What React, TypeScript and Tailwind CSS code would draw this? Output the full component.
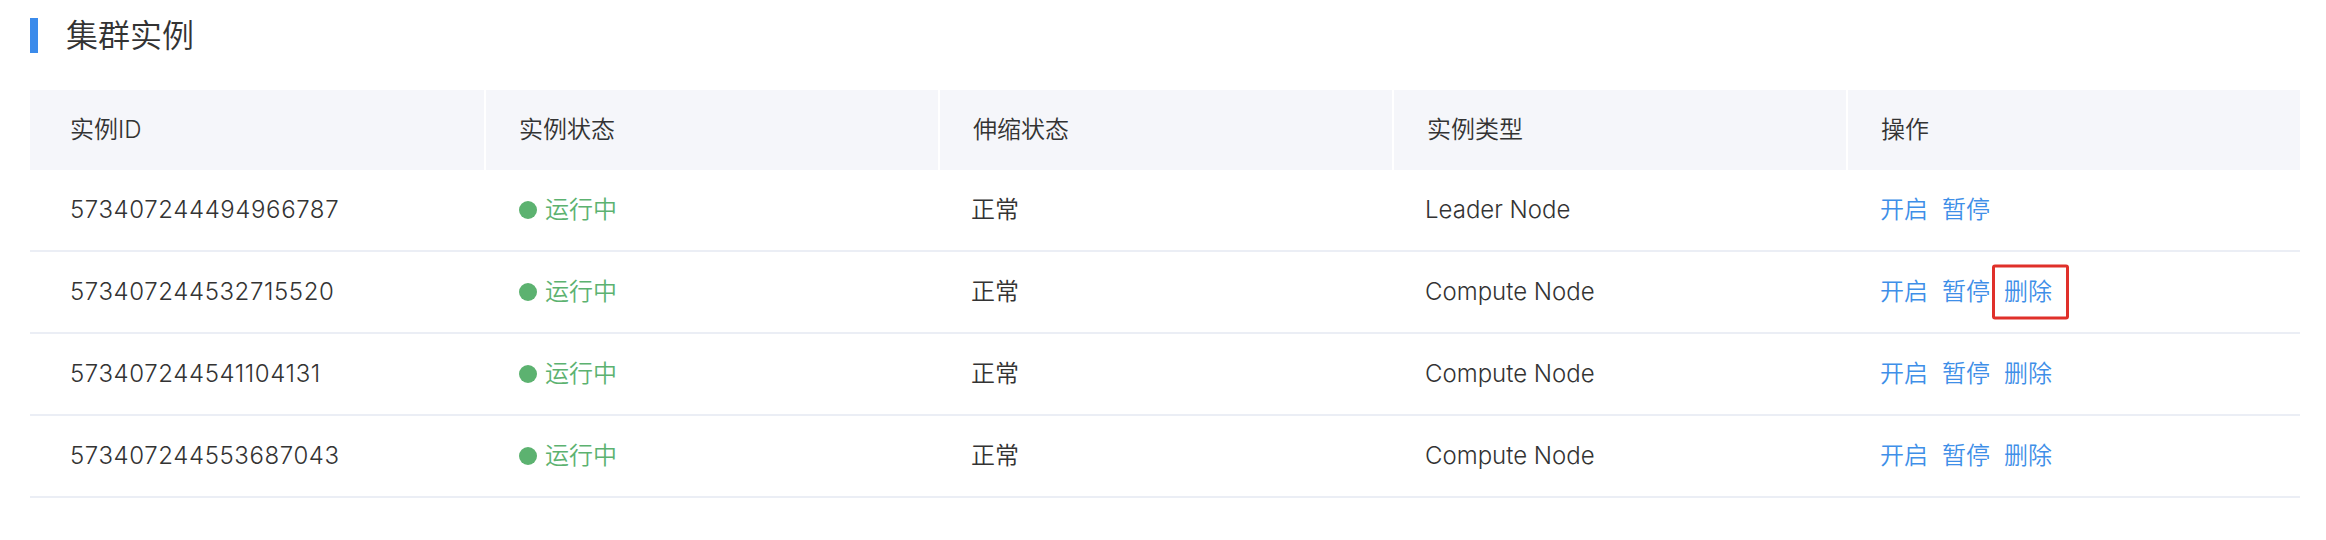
const rows = [
  { id: '573407244494966787', type: 'Leader Node', canDelete: false },
  { id: '573407244532715520', type: 'Compute Node', canDelete: true, marked: true },
  { id: '573407244541104131', type: 'Compute Node', canDelete: true },
  { id: '573407244553687043', type: 'Compute Node', canDelete: true },
]

const headers = ['实例ID', '实例状态', '伸缩状态', '实例类型', '操作']

export default function App() {
  return (
    <div
      className="min-h-screen w-[2326px] bg-white pt-[18px] font-[350] text-[#333]"
      style={{ fontFamily: "Inter, 'Noto Sans CJK SC', sans-serif" }}
    >
      {/* 标题 */}
      <div className="flex h-[35px] items-center pl-[30px]">
        <div className="h-[35px] w-[8px] bg-[#3b8beb]" />
        <h2 className="ml-[28px] text-[32px] leading-none text-[#333]">集群实例</h2>
      </div>

      {/* 表格 */}
      <div className="ml-[30px] mt-[37px] w-[2270px]">
        <div className="grid h-[80px] grid-cols-5 bg-[#f5f6fa]">
          {headers.map((h, i) => (
            <div
              key={h}
              className={
                i === 0
                  ? 'flex items-center pl-[40px] text-[24px]'
                  : 'flex items-center border-l-2 border-white pl-[33px] text-[24px]'
              }
            >
              {h}
            </div>
          ))}
        </div>

        {rows.map((r) => (
          <div key={r.id} className="grid h-[82px] grid-cols-5 border-b-2 border-[#ebeef5] text-[24px]">
            <div className="flex items-center pl-[40px] tracking-[0.6px]">{r.id}</div>
            <div className="flex items-center pl-[35px] text-[#5cb270]">
              <span className="h-[18px] w-[18px] rounded-full bg-[#5cb270]" />
              <span className="ml-[8px]">运行中</span>
            </div>
            <div className="flex items-center pl-[33px]">正常</div>
            <div className="flex items-center pl-[33px]">{r.type}</div>
            <div className="flex items-center gap-[14px] pl-[34px] text-[#3f8fe8]">
              <span>开启</span>
              <span>暂停</span>
              {r.canDelete && (
                <span className="relative">
                  删除
                  {r.marked && (
                    <span className="absolute -left-[12px] -right-[17px] top-1/2 h-[55px] -translate-y-1/2 rounded-[3px] border-[3px] border-[#e0302a]" />
                  )}
                </span>
              )}
            </div>
          </div>
        ))}
      </div>
    </div>
  )
}
